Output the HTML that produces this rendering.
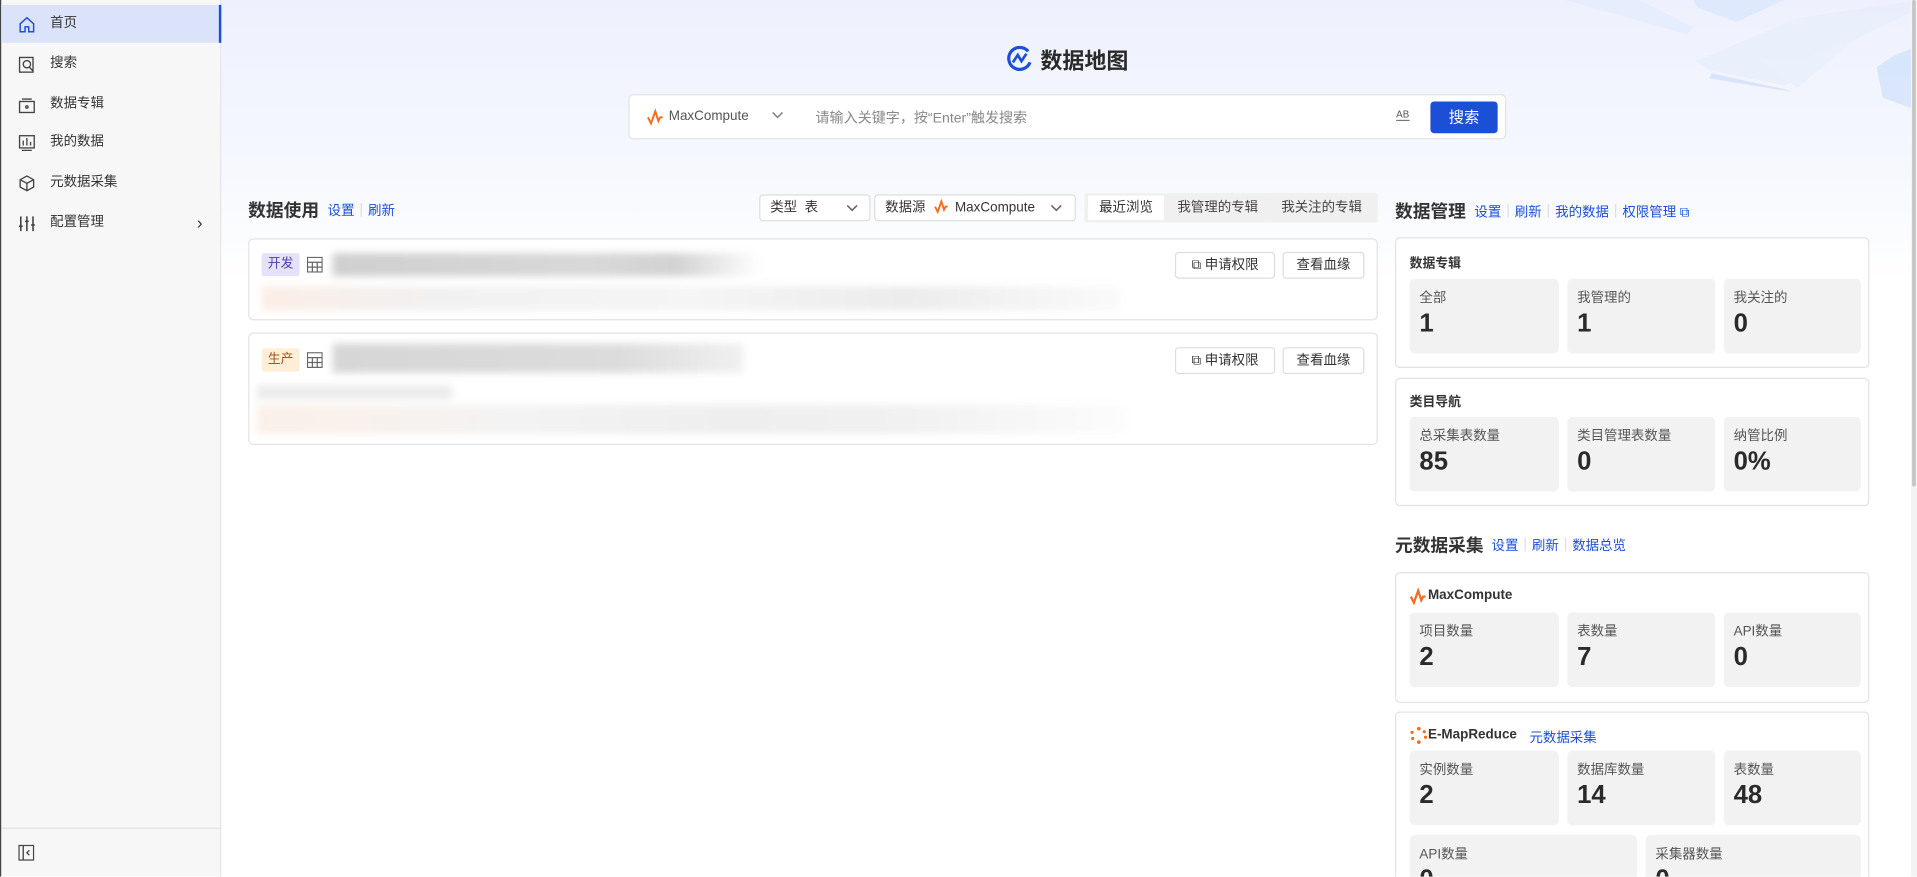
<!DOCTYPE html>
<html><head><meta charset="utf-8">
<style>
*{box-sizing:border-box;margin:0;padding:0}
html,body{width:1917px;height:876px;overflow:hidden;background:#fff}
body{font-family:"Liberation Sans","Noto Sans CJK SC",sans-serif;color:#333}
#w{position:absolute;left:0;top:0;width:1568px;height:717px;transform:scale(1.22258);transform-origin:0 0;overflow:hidden;background:linear-gradient(180deg,#eef1fd 0,#f6f8fe 140px,#fff 230px)}
.a{position:absolute}
.side{left:0;top:0;width:181px;height:717px;background:#f7f7f8;border-right:1px solid #e6e6e6;border-left:1px solid #444}
.it{position:absolute;left:0;width:180px;height:31px;font-size:11px;line-height:31px;padding-left:40px;color:#333}
.it svg{position:absolute;left:14px;top:9px}
.act{background:#dbe3fa;border-right:2px solid #1b4fd8}
.lk{color:#1b4fd8;font-size:11px}
.sep{display:inline-block;width:1px;height:11px;background:#ddd;margin:0 5px;vertical-align:-1px}
.h{font-size:14.5px;font-weight:bold;color:#333}
.card{position:absolute;border:1px solid #e3e3e3;border-radius:4px;background:#fff}
.box{position:absolute;background:#f2f2f2;border-radius:4px;height:61px}
.box .l{position:absolute;left:8px;top:7px;font-size:11px;color:#555}
.box .v{position:absolute;left:8px;top:25px;font-size:21px;font-weight:bold;color:#2a2a2a}
.st{position:absolute;font-size:10.5px;font-weight:bold;color:#333}
.btn{position:absolute;height:22px;border:1px solid #ddd;border-radius:3px;background:#fff;font-size:11px;line-height:20px;text-align:center;color:#333}
.sel{position:absolute;height:22px;border:1px solid #ddd;border-radius:3px;background:#fff;font-size:11px;line-height:20px;color:#333;padding-left:8px}
.blur{position:absolute;filter:blur(3px)}
</style></head><body>
<div id="w">
<!-- decoration -->
<svg class="a" style="left:1270px;top:0" width="298" height="120">
<polygon points="10,0 70,0 115,22 110,28" fill="#e3ebfb" opacity=".7"/>
<polygon points="115,0 190,0 150,18 118,6" fill="#d8e6fd" opacity=".7"/>
<polygon points="117,50 200,15 298,0 298,8 255,28 190,70 130,58" fill="#e8eefb" opacity=".8"/>
<polygon points="130,60 190,73 195,75 128,64" fill="#d7e4fb"/>
<polygon points="280,45 298,38 298,90 270,80 265,55" fill="#d2e2fb" opacity=".8"/>
<polygon points="200,50 250,30 200,72 170,48" fill="#eaf0fc"/>
</svg>
<!-- sidebar -->
<div class="a side">
<div class="it act" style="top:4px"><svg width="14" height="14" viewBox="0 0 14 14" fill="none" stroke="#1b4fd8" stroke-width="1.2"><path d="M1.5 6.5L7 1.5l5.5 5V13h-4V9h-3v4h-4z"/></svg>首页</div>
<div class="it" style="top:37px"><svg width="14" height="14" viewBox="0 0 14 14" fill="none" stroke="#444" stroke-width="1.1"><rect x="1" y="1" width="11" height="12"/><circle cx="7" cy="6.5" r="3"/><path d="M9 9l3 3"/></svg>搜索</div>
<div class="it" style="top:70px"><svg width="14" height="14" viewBox="0 0 14 14" fill="none" stroke="#444" stroke-width="1.1"><rect x="1" y="4" width="12" height="9"/><path d="M3 2h8"/><circle cx="7" cy="8.5" r="1"/></svg>数据专辑</div>
<div class="it" style="top:101px"><svg width="14" height="14" viewBox="0 0 14 14" fill="none" stroke="#444" stroke-width="1.1"><rect x="1" y="1" width="12" height="10"/><path d="M4 9V5M7 9V3M10 9V6M3 13h8"/></svg>我的数据</div>
<div class="it" style="top:134px"><svg width="14" height="14" viewBox="0 0 14 14" fill="none" stroke="#444" stroke-width="1.1"><path d="M7 1l5.5 3v6L7 13 1.5 10V4z M1.5 4L7 7l5.5-3M7 7v6"/></svg>元数据采集</div>
<div class="it" style="top:167px"><svg width="14" height="14" viewBox="0 0 14 14" fill="none" stroke="#444" stroke-width="1.3"><path d="M2 1v12M7 1v12M12 1v12M0.5 9h3M5.5 5h3M10.5 8h3"/></svg>配置管理<span style="position:absolute;left:160px;top:0;font-size:14px">›</span></div>
<div class="a" style="left:0;top:677px;width:180px;height:1px;background:#e3e3e3"></div>
<svg class="a" style="left:14px;top:691px" width="13" height="13" viewBox="0 0 13 13" fill="none" stroke="#444" stroke-width="1.1"><rect x="0.5" y="0.5" width="12" height="12"/><path d="M4 0.5v12M9 4.5L7 6.5l2 2"/></svg>
</div>
<!-- scrollbar -->
<div class="a" style="left:1563px;top:0;width:5px;height:717px;background:#f3f3f3"></div>
<div class="a" style="left:1564px;top:0;width:3px;height:398px;background:#c4c4c4;border-radius:2px"></div>
<!-- title -->
<svg class="a" style="left:823px;top:37px" width="22" height="22" viewBox="0 0 22 22" fill="none" stroke="#1b4fd8" stroke-width="2.6"><path d="M18 5A9 9 0 1 0 19.5 14"/><path d="M5.5 14l4-6 3 5 4-6" stroke-width="2.2"/></svg>
<div class="a" style="left:851px;top:36px;font-size:18px;font-weight:bold;color:#2a2a2a">数据地图</div>
<!-- search -->
<div class="a" style="left:514px;top:77px;width:718px;height:37px;background:#fff;border:1px solid #e3e3e3;border-radius:4px"></div>
<svg class="a" style="left:529px;top:89px" width="14" height="14" viewBox="0 0 14 14" fill="none" stroke="#f26d1f" stroke-width="1.6"><path d="M1 7l2.5 5L7 2l2.5 8 1.5-3h2"/></svg>
<div class="a" style="left:547px;top:89px;font-size:11px;color:#555">MaxCompute</div>
<svg class="a" style="left:631px;top:91px" width="10" height="8"><path d="M1 1l4 4 4-4" fill="none" stroke="#888" stroke-width="1.3"/></svg>
<div class="a" style="left:667px;top:88px;font-size:11.5px;color:#888">请输入关键字，按“Enter”触发搜索</div>
<div class="a" style="left:1142px;top:89px;font-size:8px;color:#555;border-bottom:1px solid #777;line-height:9px">AB</div>
<div class="a" style="left:1170px;top:83px;width:55px;height:26px;background:#1b4fd6;border-radius:3px;color:#fff;font-size:12.5px;line-height:26px;text-align:center">搜索</div>
<!-- left section -->
<div class="a h" style="left:203px;top:161px">数据使用</div>
<div class="a lk" style="left:268px;top:164px">设置<span class="sep"></span>刷新</div>
<div class="sel" style="left:621px;top:159px;width:91px">类型&nbsp; 表<svg class="a" style="left:70px;top:7px" width="10" height="8"><path d="M1 1l4 4 4-4" fill="none" stroke="#666" stroke-width="1.3"/></svg></div>
<div class="sel" style="left:715px;top:159px;width:165px">数据源 <svg style="vertical-align:-2px;margin:0 2px 0 4px" width="12" height="12" viewBox="0 0 14 14" fill="none" stroke="#f26d1f" stroke-width="1.8"><path d="M1 7l2.5 5L7 2l2.5 8 1.5-3h2"/></svg> MaxCompute<svg class="a" style="left:143px;top:7px" width="10" height="8"><path d="M1 1l4 4 4-4" fill="none" stroke="#666" stroke-width="1.3"/></svg></div>
<div class="a" style="left:887px;top:158px;width:240px;height:24px;background:#f0f0f0;border-radius:2px;font-size:11px;line-height:24px;color:#444">
<div class="a" style="left:3px;top:2px;width:62px;height:20px;background:#fff;line-height:20px;text-align:center;color:#333">最近浏览</div>
<span class="a" style="left:76px">我管理的专辑</span><span class="a" style="left:161px">我关注的专辑</span></div>
<div class="card" style="left:203px;top:195px;width:924px;height:67px">
<div class="a" style="left:10px;top:11px;width:31px;height:19px;background:#e6e1fb;color:#4a3da6;font-size:10.5px;line-height:19px;text-align:center;border-radius:2px">开发</div>
<svg class="a" style="left:47px;top:14px" width="13" height="13" fill="none" stroke="#666"><rect x=".5" y=".5" width="12" height="12"/><path d="M.5 4.5h12M.5 8.5h12M4.5 4.5v8M8.5 4.5v8"/></svg>
<div class="blur" style="left:68px;top:11px;width:350px;height:19px;background:linear-gradient(90deg,#cfcfcf,#d8d8d8 60%,#d2d2d2 80%,#fff)"></div>
<div class="blur" style="left:10px;top:38px;width:702px;height:20px;background:linear-gradient(90deg,#fbeee6,#f1f1f1 20%,#f5f5f5 50%,#ececec 75%,#fafafa)"></div>
<div class="btn" style="left:757px;top:10px;width:82px">⧉ 申请权限</div>
<div class="btn" style="left:845px;top:10px;width:67px">查看血缘</div>
</div>
<div class="card" style="left:203px;top:272px;width:924px;height:92px">
<div class="a" style="left:10px;top:12px;width:31px;height:19px;background:#fdeed6;color:#a2561b;font-size:10.5px;line-height:19px;text-align:center;border-radius:2px">生产</div>
<svg class="a" style="left:47px;top:15px" width="13" height="13" fill="none" stroke="#666"><rect x=".5" y=".5" width="12" height="12"/><path d="M.5 4.5h12M.5 8.5h12M4.5 4.5v8M8.5 4.5v8"/></svg>
<div class="blur" style="left:68px;top:8px;width:336px;height:24px;background:linear-gradient(90deg,#d6d6d6,#dcdcdc 70%,#f0f0f0)"></div>
<div class="blur" style="left:6px;top:42px;width:160px;height:12px;background:#ececec"></div>
<div class="blur" style="left:6px;top:58px;width:710px;height:24px;background:linear-gradient(90deg,#fbf0e9,#f3f3f3 30%,#eeeeee 55%,#f1f1f1 75%,#fcfcfc)"></div>
<div class="btn" style="left:757px;top:11px;width:82px">⧉ 申请权限</div>
<div class="btn" style="left:845px;top:11px;width:67px">查看血缘</div>
</div>
<!-- right -->
<div class="a h" style="left:1141px;top:162px">数据管理</div>
<div class="a lk" style="left:1206px;top:165px">设置<span class="sep"></span>刷新<span class="sep"></span>我的数据<span class="sep"></span>权限管理 ⧉</div>
<div class="card" style="left:1141px;top:194px;width:388px;height:107px">
<div class="st" style="left:11px;top:13px">数据专辑</div>
<div class="box" style="left:11px;top:33px;width:122px"><span class="l">全部</span><span class="v">1</span></div>
<div class="box" style="left:140px;top:33px;width:121px"><span class="l">我管理的</span><span class="v">1</span></div>
<div class="box" style="left:268px;top:33px;width:112px"><span class="l">我关注的</span><span class="v">0</span></div>
</div>
<div class="card" style="left:1141px;top:309px;width:388px;height:105px">
<div class="st" style="left:11px;top:11px">类目导航</div>
<div class="box" style="left:11px;top:31px;width:122px"><span class="l">总采集表数量</span><span class="v">85</span></div>
<div class="box" style="left:140px;top:31px;width:121px"><span class="l">类目管理表数量</span><span class="v">0</span></div>
<div class="box" style="left:268px;top:31px;width:112px"><span class="l">纳管比例</span><span class="v">0%</span></div>
</div>
<div class="a h" style="left:1141px;top:435px">元数据采集</div>
<div class="a lk" style="left:1220px;top:438px">设置<span class="sep"></span>刷新<span class="sep"></span>数据总览</div>
<div class="card" style="left:1141px;top:468px;width:388px;height:107px">
<svg class="a" style="left:11px;top:12px" width="14" height="14" viewBox="0 0 14 14" fill="none" stroke="#f26d1f" stroke-width="1.8"><path d="M1 7l2.5 5L7 2l2.5 8 1.5-3h2"/></svg>
<div class="st" style="left:26px;top:12px;font-size:11px">MaxCompute</div>
<div class="box" style="left:11px;top:32px;width:122px"><span class="l">项目数量</span><span class="v">2</span></div>
<div class="box" style="left:140px;top:32px;width:121px"><span class="l">表数量</span><span class="v">7</span></div>
<div class="box" style="left:268px;top:32px;width:112px"><span class="l">API数量</span><span class="v">0</span></div>
</div>
<div class="card" style="left:1141px;top:582px;width:388px;height:150px">
<svg class="a" style="left:11px;top:11px" width="15" height="15" viewBox="0 0 15 15" fill="#f26d1f"><circle cx="7.5" cy="2" r="1.5"/><circle cx="12" cy="4.5" r="1.3"/><circle cx="13" cy="9" r="1.3"/><circle cx="7.5" cy="13" r="1.5"/><circle cx="2.5" cy="10" r="1.3"/><circle cx="2" cy="5" r="1.3"/></svg>
<div class="st" style="left:26px;top:12px;font-size:11px">E-MapReduce</div>
<div class="a lk" style="left:109px;top:12px">元数据采集</div>
<div class="box" style="left:11px;top:31px;width:122px"><span class="l">实例数量</span><span class="v">2</span></div>
<div class="box" style="left:140px;top:31px;width:121px"><span class="l">数据库数量</span><span class="v">14</span></div>
<div class="box" style="left:268px;top:31px;width:112px"><span class="l">表数量</span><span class="v">48</span></div>
<div class="box" style="left:11px;top:100px;width:186px"><span class="l">API数量</span><span class="v">0</span></div>
<div class="box" style="left:204px;top:100px;width:176px"><span class="l">采集器数量</span><span class="v">0</span></div>
</div>
</div>
</body></html>
